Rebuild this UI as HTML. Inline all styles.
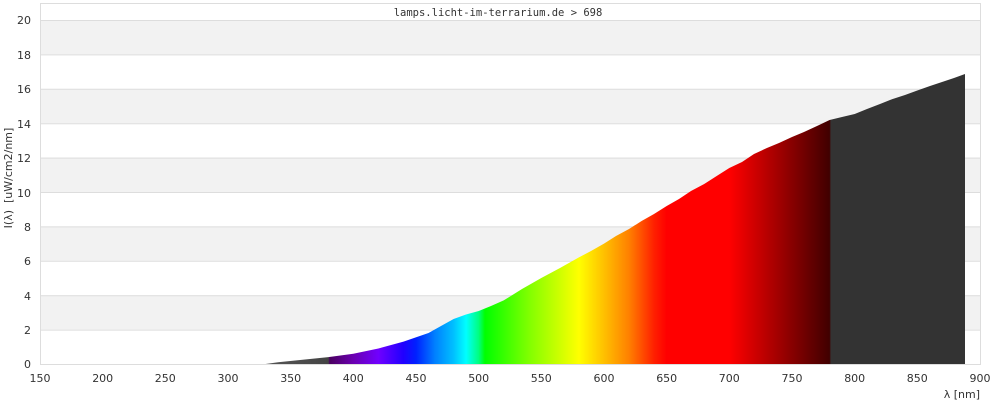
<!DOCTYPE html>
<html><head><meta charset="utf-8"><style>
html,body{margin:0;padding:0;background:#fff;width:1000px;height:400px;overflow:hidden}
svg text{font-family:"DejaVu Sans","Liberation Sans",sans-serif;font-size:11px;fill:#333}
</style></head><body>
<svg width="1000" height="400" xmlns="http://www.w3.org/2000/svg">
<defs>
<linearGradient id="g" gradientUnits="userSpaceOnUse" x1="0" y1="0" x2="1000" y2="0">
<stop offset="0.2656" stop-color="#555"/>
<stop offset="0.3283" stop-color="#444"/>
<stop offset="0.3296" stop-color="#4a0060"/>
<stop offset="0.3533" stop-color="#6a00b0"/>
<stop offset="0.3784" stop-color="#7000ff"/>
<stop offset="0.4035" stop-color="#2000ff"/>
<stop offset="0.416" stop-color="#0020ff"/>
<stop offset="0.435" stop-color="#0080ff"/>
<stop offset="0.4536" stop-color="#00c0ff"/>
<stop offset="0.4661" stop-color="#00ffff"/>
<stop offset="0.4787" stop-color="#00ff80"/>
<stop offset="0.485" stop-color="#00ff00"/>
<stop offset="0.5288" stop-color="#80ff00"/>
<stop offset="0.5789" stop-color="#ffff00"/>
<stop offset="0.604" stop-color="#ffc000"/>
<stop offset="0.629" stop-color="#ff8000"/>
<stop offset="0.654" stop-color="#ff2000"/>
<stop offset="0.6667" stop-color="#ff0000"/>
<stop offset="0.7293" stop-color="#ff0000"/>
<stop offset="0.8296" stop-color="#400000"/>
<stop offset="0.8310" stop-color="#333333"/>
<stop offset="1" stop-color="#333333"/>
</linearGradient>
</defs>
<rect x="40" y="3" width="940" height="361" fill="#fff"/>
<rect x="40" y="20" width="940" height="34.4" fill="#f2f2f2"/>
<rect x="40" y="88.8" width="940" height="34.4" fill="#f2f2f2"/>
<rect x="40" y="157.6" width="940" height="34.4" fill="#f2f2f2"/>
<rect x="40" y="226.4" width="940" height="34.4" fill="#f2f2f2"/>
<rect x="40" y="295.2" width="940" height="34.4" fill="#f2f2f2"/>
<g stroke="#ddd" stroke-width="1">
<line x1="40" x2="980" y1="20.5" y2="20.5"/>
<line x1="40" x2="980" y1="54.9" y2="54.9"/>
<line x1="40" x2="980" y1="89.3" y2="89.3"/>
<line x1="40" x2="980" y1="123.7" y2="123.7"/>
<line x1="40" x2="980" y1="158.1" y2="158.1"/>
<line x1="40" x2="980" y1="192.5" y2="192.5"/>
<line x1="40" x2="980" y1="226.9" y2="226.9"/>
<line x1="40" x2="980" y1="261.3" y2="261.3"/>
<line x1="40" x2="980" y1="295.7" y2="295.7"/>
<line x1="40" x2="980" y1="330.1" y2="330.1"/>
</g>
<rect x="40.5" y="3.5" width="940" height="361" fill="none" stroke="#ddd"/>
<path fill="url(#g)" d="M265.6,364 L278.1,362.3 L328.3,357.1 L353.3,353.7 L378.4,348.5 L403.5,341.6 L428.5,333 L441,326 L453.6,319 L466,314.5 L478.7,311 L491,306 L503.7,300.4 L522,289 L541.3,278 L560,268 L578.9,257.4 L591,251 L604,243.6 L616,236 L629,229 L641.6,221 L654,214 L666.7,206 L679,199 L691,191 L704.2,184 L716.7,176 L729.3,168 L742,162 L754,154 L766.9,148 L779,143 L792,137 L804,132 L817,126 L829.6,120 L842,117 L854.7,114 L867,109 L880,104 L892.3,99.1 L905,95 L917.3,90.5 L930,86 L942.4,81.9 L954,78 L965,74 L965,364 Z"/>
<text x="498" y="16" text-anchor="middle" style="font-family:'DejaVu Sans Mono','Liberation Mono',monospace;font-size:10.5px">lamps.licht-im-terrarium.de &gt; 698</text>
<g text-anchor="end">
<text x="31" y="24">20</text><text x="31" y="59">18</text><text x="31" y="93">16</text>
<text x="31" y="128">14</text><text x="31" y="162">12</text><text x="31" y="197">10</text>
<text x="31" y="231">8</text><text x="31" y="265">6</text><text x="31" y="300">4</text>
<text x="31" y="334">2</text><text x="31" y="368">0</text>
</g>
<g text-anchor="middle">
<text x="40" y="382">150</text><text x="102.7" y="382">200</text><text x="165.3" y="382">250</text>
<text x="228" y="382">300</text><text x="290.7" y="382">350</text><text x="353.3" y="382">400</text>
<text x="416" y="382">450</text><text x="478.7" y="382">500</text><text x="541.3" y="382">550</text>
<text x="604" y="382">600</text><text x="666.7" y="382">650</text><text x="729.3" y="382">700</text>
<text x="792" y="382">750</text><text x="854.7" y="382">800</text><text x="917.3" y="382">850</text>
<text x="980" y="382">900</text>
</g>
<text x="980" y="398" text-anchor="end">λ [nm]</text>
<text transform="translate(12,178) rotate(-90)" text-anchor="middle" xml:space="preserve">I(λ)  [uW/cm2/nm]</text>
</svg>
</body></html>
